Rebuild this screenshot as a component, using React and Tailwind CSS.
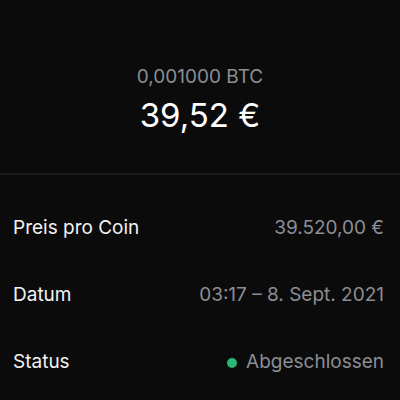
const rows = [
    { label: "Preis pro Coin", value: "39.520,00 €" },
    { label: "Datum", value: "03:17 – 8. Sept. 2021" },
    { label: "Status", value: "Abgeschlossen", dot: true },
]

const App = () => {
    return (
        <div className="h-[400px] w-[400px] bg-[#0b0b0c] font-['Inter',sans-serif] overflow-hidden">
            <div className="flex flex-col items-center pt-[65px] pb-[38px]">
                <p className="text-[19px] leading-[24px] text-[#8b8e94]">0,001000 BTC</p>
                <p className="mt-[6px] text-[33px] leading-[40px] text-white">39,52 €</p>
            </div>
            <div className="h-[2px] bg-[#1c1c1e]" />
            <div className="flex flex-col pl-[13px] pr-[16px] pt-[20px]">
                {rows.map((row) => (
                    <div key={row.label} className="flex items-center justify-between h-[67px]">
                        <span className="text-[19px] text-[#f2f2f2]">{row.label}</span>
                        <span className="flex items-center gap-[9px] text-[19px] text-[#8b8e94]">
                            {row.dot && <span className="w-[10px] h-[10px] rounded-full bg-[#2bb673]" />}
                            {row.value}
                        </span>
                    </div>
                ))}
            </div>
        </div>
    )
}

export default App
